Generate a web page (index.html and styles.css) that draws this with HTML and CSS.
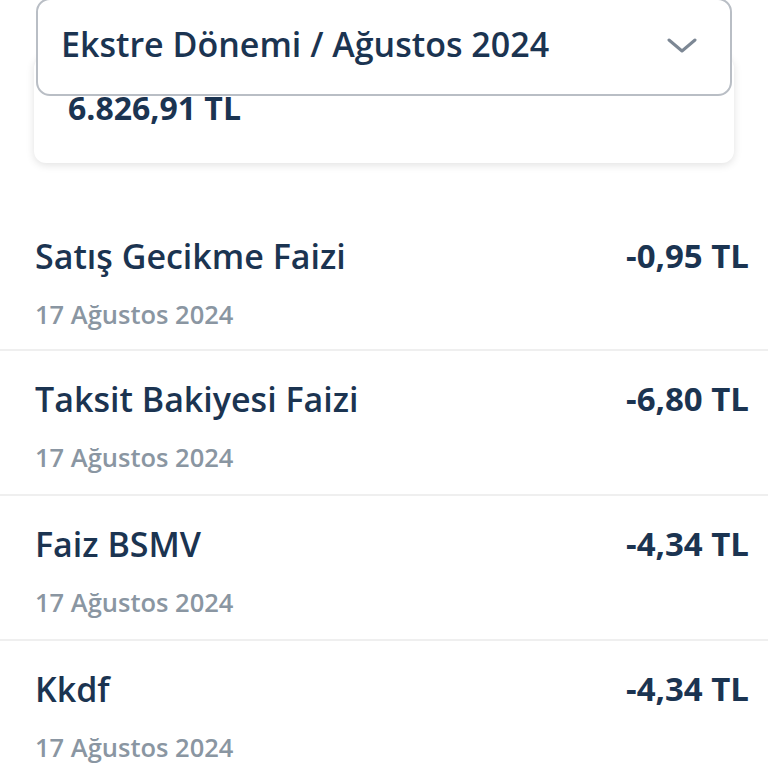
FILE: index.html
```html
<!DOCTYPE html>
<html lang="tr">
<head>
  <meta charset="UTF-8">
  <meta name="viewport" content="width=device-width, initial-scale=1.0">
  <title>Ekstre Detayı</title>
  <link rel="stylesheet" href="styles.css">
</head>
<body>
  <div class="summary">
    <!-- Dönem seçimi -->
    <div class="period-select">
      <span class="period-label">Ekstre Dönemi / Ağustos 2024</span>
      <svg class="chevron" width="30" height="16" viewBox="0 0 30 16">
        <path d="M2 2 L15 13 L28 2" fill="none" stroke="#7c8794" stroke-width="3" stroke-linecap="round" stroke-linejoin="round"/>
      </svg>
    </div>

    <!-- Toplam borç kartı -->
    <div class="total-card">
      <span class="total-amount">6.826,91 TL</span>
    </div>
  </div>

  <!-- İşlem listesi -->
  <ul class="transactions">
    <li class="tx">
      <div class="tx-info">
        <span class="tx-title">Satış Gecikme Faizi</span>
        <span class="tx-date">17 Ağustos 2024</span>
      </div>
      <span class="tx-amount">-0,95 TL</span>
    </li>
    <li class="tx">
      <div class="tx-info">
        <span class="tx-title">Taksit Bakiyesi Faizi</span>
        <span class="tx-date">17 Ağustos 2024</span>
      </div>
      <span class="tx-amount">-6,80 TL</span>
    </li>
    <li class="tx">
      <div class="tx-info">
        <span class="tx-title">Faiz BSMV</span>
        <span class="tx-date">17 Ağustos 2024</span>
      </div>
      <span class="tx-amount">-4,34 TL</span>
    </li>
    <li class="tx">
      <div class="tx-info">
        <span class="tx-title">Kkdf</span>
        <span class="tx-date">17 Ağustos 2024</span>
      </div>
      <span class="tx-amount">-4,34 TL</span>
    </li>
  </ul>
</body>
</html>
```

FILE: styles.css
```css
* {
  margin: 0;
  padding: 0;
  box-sizing: border-box;
}

body {
  font-family: "Open Sans", "Noto Sans", sans-serif;
  background-color: #ffffff;
  color: #1b3451;
  overflow: hidden;
}

.summary {
  padding: 0 34px;
  margin-top: -2px;
}

.period-select {
  position: relative;
  z-index: 2;
  margin: 0 2px;
  height: 98px;
  background-color: #ffffff;
  border: 2px solid #b9bec5;
  border-radius: 14px;
  display: flex;
  align-items: center;
  justify-content: space-between;
  padding: 0 33px 6px 23px;
}

.period-label {
  font-size: 34px;
  font-weight: 600;
  color: #1b3451;
}

.chevron {
  margin-top: 4px;
}

.total-card {
  position: relative;
  z-index: 1;
  margin-top: -40px;
  height: 107px;
  background-color: #ffffff;
  border-radius: 12px;
  box-shadow: 0 2px 8px rgba(0, 0, 0, 0.12);
  padding: 32px 34px 0;
}

.total-amount {
  font-size: 32px;
  font-weight: 700;
  line-height: 40px;
}

.transactions {
  list-style: none;
  margin-top: 43px;
}

.tx {
  display: flex;
  justify-content: space-between;
  align-items: flex-start;
  padding: 28px 19px 0 35px;
  height: 145px;
  border-top: 2px solid #efefef;
}

.tx:first-child {
  border-top: none;
  padding-top: 30px;
  height: 143px;
}

.tx-info {
  display: flex;
  flex-direction: column;
}

.tx-title {
  font-size: 34px;
  font-weight: 600;
  line-height: 40px;
}

.tx-date {
  font-size: 25.5px;
  font-weight: 600;
  line-height: 32px;
  margin-top: 22px;
  color: #8a96a2;
}

.tx-amount {
  font-size: 33px;
  font-weight: 700;
  line-height: 40px;
}
```
